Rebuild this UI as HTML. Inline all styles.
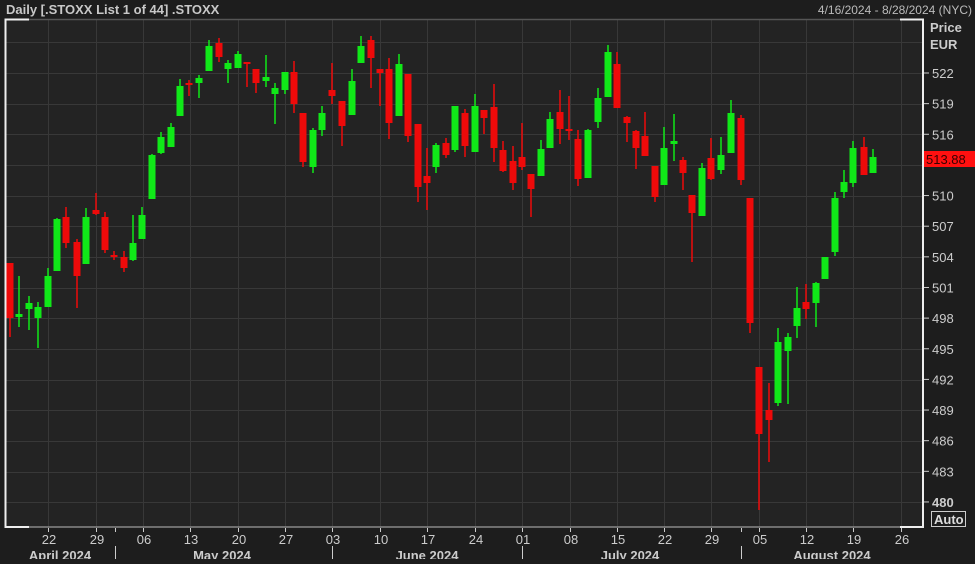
<!DOCTYPE html>
<html><head><meta charset="utf-8"><style>
body{margin:0;background:#1d1d1d;width:975px;height:559px;overflow:hidden;font-family:"Liberation Sans",sans-serif}
</style></head><body>
<svg width="975" height="559" xmlns="http://www.w3.org/2000/svg" font-family="Liberation Sans, sans-serif">
<rect width="975" height="559" fill="#1d1d1d"/>
<rect x="5" y="19" width="918" height="508" fill="#232323"/>
<g stroke="#383838" stroke-width="1">
<line x1="5" x2="923" y1="42.5" y2="42.5"/><line x1="5" x2="923" y1="73.5" y2="73.5"/><line x1="5" x2="923" y1="104.5" y2="104.5"/><line x1="5" x2="923" y1="134.5" y2="134.5"/><line x1="5" x2="923" y1="165.5" y2="165.5"/><line x1="5" x2="923" y1="196.5" y2="196.5"/><line x1="5" x2="923" y1="226.5" y2="226.5"/><line x1="5" x2="923" y1="257.5" y2="257.5"/><line x1="5" x2="923" y1="288.5" y2="288.5"/><line x1="5" x2="923" y1="318.5" y2="318.5"/><line x1="5" x2="923" y1="349.5" y2="349.5"/><line x1="5" x2="923" y1="380.5" y2="380.5"/><line x1="5" x2="923" y1="410.5" y2="410.5"/><line x1="5" x2="923" y1="441.5" y2="441.5"/><line x1="5" x2="923" y1="472.5" y2="472.5"/><line x1="5" x2="923" y1="502.5" y2="502.5"/>
<line y1="19" y2="527" x1="48.5" x2="48.5"/><line y1="19" y2="527" x1="96.5" x2="96.5"/><line y1="19" y2="527" x1="143.5" x2="143.5"/><line y1="19" y2="527" x1="190.5" x2="190.5"/><line y1="19" y2="527" x1="238.5" x2="238.5"/><line y1="19" y2="527" x1="285.5" x2="285.5"/><line y1="19" y2="527" x1="332.5" x2="332.5"/><line y1="19" y2="527" x1="380.5" x2="380.5"/><line y1="19" y2="527" x1="427.5" x2="427.5"/><line y1="19" y2="527" x1="475.5" x2="475.5"/><line y1="19" y2="527" x1="522.5" x2="522.5"/><line y1="19" y2="527" x1="570.5" x2="570.5"/><line y1="19" y2="527" x1="617.5" x2="617.5"/><line y1="19" y2="527" x1="664.5" x2="664.5"/><line y1="19" y2="527" x1="711.5" x2="711.5"/><line y1="19" y2="527" x1="759.5" x2="759.5"/><line y1="19" y2="527" x1="806.5" x2="806.5"/><line y1="19" y2="527" x1="853.5" x2="853.5"/><line y1="19" y2="527" x1="901.5" x2="901.5"/>
</g>
<g stroke="#777" stroke-width="1.5" fill="none">
<line x1="5" y1="19.5" x2="923" y2="19.5" stroke="#555"/>
<line x1="5" y1="527" x2="923" y2="527" stroke="#888"/>
</g>
<g stroke="#eee" stroke-width="2" fill="none">
<polyline points="29,19.5 5.5,19.5 5.5,527 29,527"/>
<polyline points="900,19.5 923,19.5 923,527 900,527"/>
</g>
<g id="c"></g>
<g fill="#ccc" font-size="12">
<text x="6" y="14" font-weight="bold" font-size="13" fill="#c8c8c8">Daily [.STOXX List 1 of 44] .STOXX</text>
<text x="972" y="14" text-anchor="end" fill="#bbb">4/16/2024 - 8/28/2024 (NYC)</text>
<text x="930" y="32" font-weight="bold" font-size="13">Price</text>
<text x="930" y="49" font-weight="bold" font-size="13">EUR</text>
</g>
<g fill="#ccc" font-size="13" id="py"></g>
<rect x="924" y="151" width="51" height="16" fill="#ff1010"/>
<text x="926" y="164" font-size="13" fill="#3a0000">513.88</text>
<rect x="931.5" y="511.5" width="34" height="15" fill="none" stroke="#ccc"/>
<text x="934" y="524" font-size="13" font-weight="bold" fill="#ddd">Auto</text>
<g fill="#ccc" font-size="13" text-anchor="middle" id="dx"></g>
<g fill="#ccc" font-size="13" font-weight="bold" text-anchor="middle">
<text x="60" y="560">April 2024</text><text x="222" y="560">May 2024</text><text x="427" y="560">June 2024</text><text x="630" y="560">July 2024</text><text x="832" y="560">August 2024</text>
</g>
<g stroke="#ccc" stroke-width="1">
<line x1="115.5" y1="546" x2="115.5" y2="559"/><line x1="332.5" y1="546" x2="332.5" y2="559"/><line x1="522.5" y1="546" x2="522.5" y2="559"/><line x1="741.5" y1="546" x2="741.5" y2="559"/>
<line x1="115.5" y1="528" x2="115.5" y2="532"/><line x1="741.5" y1="528" x2="741.5" y2="532"/>
</g>
<script>
var ns="http://www.w3.org/2000/svg";
function el(t,a,p,tx){var e=document.createElementNS(ns,t);for(var k in a)e.setAttribute(k,a[k]);if(tx)e.textContent=tx;p.appendChild(e);return e;}
var C=[[10,263,337,263,318,0],[19,276,327,314,317,1],[29,296,330,303,309,1],[38,302,348,307,318,1],[48,268,307,276,307,1],[57,218,271,219,271,1],[66,207,248,217,243,0],[77,239,308,242,276,0],[86,208,264,217,264,1],[96,193,215,210,214,0],[105,212,253,217,250,0],[114,251,260,255,256,0],[124,251,272,257,268,0],[133,215,261,243,260,1],[142,207,239,215,239,1],[152,154,199,155,199,1],[161,132,154,137,153,1],[171,123,147,127,147,1],[180,79,116,86,116,1],[189,80,96,83,85,0],[199,75,98,78,83,1],[209,40,71,46,71,1],[219,38,62,43,57,0],[228,60,83,63,69,1],[238,51,68,54,68,1],[247,62,87,62,64,0],[256,69,93,69,83,0],[266,55,87,77,81,1],[275,83,124,88,94,1],[285,72,94,72,90,1],[294,61,113,72,104,0],[303,113,167,113,162,0],[313,128,173,130,167,1],[322,106,136,113,130,1],[332,63,104,90,96,0],[342,101,146,101,126,0],[352,69,115,81,115,1],[361,36,63,46,63,1],[371,36,88,40,58,0],[380,69,106,69,73,0],[389,58,139,69,123,0],[399,54,116,64,116,1],[408,74,142,74,136,0],[418,124,202,124,187,0],[427,148,210,176,183,0],[436,143,173,145,167,1],[446,138,158,143,155,0],[455,106,152,106,150,1],[465,109,157,113,146,0],[475,94,152,106,152,1],[484,110,134,110,118,0],[494,84,162,107,148,0],[503,141,172,150,171,0],[513,146,190,161,183,0],[522,123,170,157,167,0],[531,174,217,174,189,0],[541,140,176,149,176,1],[550,112,148,119,148,1],[560,90,144,112,129,0],[569,96,140,129,131,0],[578,130,186,139,179,0],[588,129,178,130,178,1],[598,88,128,98,122,1],[608,45,97,52,97,1],[617,52,108,64,108,0],[627,116,142,117,123,0],[636,130,169,131,148,0],[645,112,156,136,156,0],[655,166,202,166,197,0],[664,127,185,148,185,1],[674,114,161,141,144,1],[683,157,190,160,173,0],[692,195,262,195,213,0],[702,163,216,168,216,1],[711,138,180,158,179,0],[721,137,174,155,170,1],[731,100,153,113,153,1],[741,115,185,118,180,0],[750,198,333,198,323,0],[759,367,510,367,434,0],[769,383,462,410,420,0],[778,328,406,342,403,1],[788,333,404,337,351,1],[797,287,338,308,326,1],[806,284,319,302,309,0],[816,282,327,283,303,1],[825,257,279,257,279,1],[835,192,256,198,252,1],[844,170,198,182,192,1],[853,141,187,148,183,1],[864,137,175,147,175,0],[873,149,173,157,173,1]];
var g=document.getElementById("c");
C.forEach(function(c){var col=c[5]?"#10e818":"#ee0a0a";
el("rect",{x:c[0]-0.75,y:c[1],width:1.5,height:c[2]-c[1],fill:col},g);
el("rect",{x:c[0]-3.5,y:c[3],width:7,height:Math.max(2,c[4]-c[3]),fill:col},g);});
var py=document.getElementById("py");
for(var i=0;i<15;i++){var p=522-3*i,y=73+i*30.64;if(p==513)continue;
el("line",{x1:924,x2:929,y1:y,y2:y,stroke:"#ccc"},py);
var t=el("text",{x:932,y:y+5},py,String(p));if(p==480)t.setAttribute("font-weight","bold");}
var dx=document.getElementById("dx");
var xs=[48,96,143,190,238,285,332,380,427,475,522,570,617,664,711,759,806,853,901];
var ds=["22","29","06","13","20","27","03","10","17","24","01","08","15","22","29","05","12","19","26"];
xs.forEach(function(x,i){el("line",{x1:x+0.5,x2:x+0.5,y1:528,y2:532,stroke:"#ccc"},dx);el("text",{x:x+1,y:544},dx,ds[i]);});
</script>
</svg>
</body></html>
